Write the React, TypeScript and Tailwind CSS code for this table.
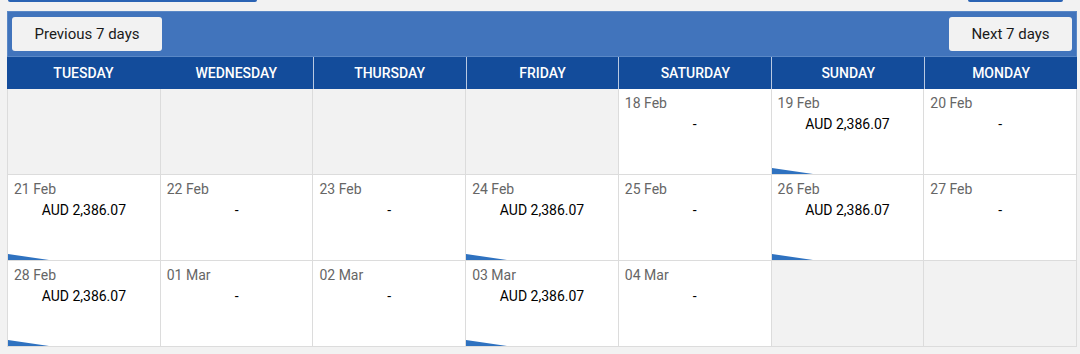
const days = ['Tuesday', 'Wednesday', 'Thursday', 'Friday', 'Saturday', 'Sunday', 'Monday']

type Cell = { date: string; price?: string } | null

const price = 'AUD 2,386.07'

const cells: Cell[] = [
  null,
  null,
  null,
  null,
  { date: '18 Feb' },
  { date: '19 Feb', price },
  { date: '20 Feb' },
  { date: '21 Feb', price },
  { date: '22 Feb' },
  { date: '23 Feb' },
  { date: '24 Feb', price },
  { date: '25 Feb' },
  { date: '26 Feb', price },
  { date: '27 Feb' },
  { date: '28 Feb', price },
  { date: '01 Mar' },
  { date: '02 Mar' },
  { date: '03 Mar', price },
  { date: '04 Mar' },
  null,
  null,
]

function Corner() {
  return (
    <svg className="absolute bottom-0 left-0" width="41" height="6" viewBox="0 0 41 6">
      <polygon points="0,0 41,6 0,6" fill="#2f72c0" />
    </svg>
  )
}

export default function App() {
  return (
    <div
      className="h-[354px] w-[1080px] overflow-hidden bg-[#f2f2f2] pl-[7px] pr-[3px]"
      style={{ fontFamily: 'Roboto, "Liberation Sans", sans-serif' }}
    >
      {/* cut-off buttons from the section above */}
      <div className="flex h-[11px] items-start justify-between">
        <div className="ml-[1px] h-[2px] w-[249px] rounded-b-[3px] bg-[#2a63b4]" />
        <div className="mr-[14px] h-[2px] w-[95px] rounded-b-[3px] bg-[#2a63b4]" />
      </div>

      {/* nav bar */}
      <div className="flex h-[46px] items-center justify-between border border-[#5a88c6] bg-[#4174bc] px-[4px]">
        <button className="h-[34px] w-[150px] rounded-[3px] bg-[#f2f2f2] text-[15px] text-[#1a1a1a]">
          Previous 7 days
        </button>
        <button className="h-[34px] w-[123px] rounded-[3px] bg-[#f2f2f2] text-[15px] text-[#1a1a1a]">
          Next 7 days
        </button>
      </div>

      {/* weekday header */}
      <div className="grid h-[32px] grid-cols-7 bg-[#134c9b]">
        {days.map((d, i) => (
          <div
            key={d}
            className={
              'flex items-center justify-center text-[14px] font-medium uppercase text-white ' +
              (i > 1 ? 'border-l border-[#b9c9e2]' : '')
            }
          >
            {d}
          </div>
        ))}
      </div>

      {/* day cells */}
      <div className="grid grid-cols-7 border-l border-[#dcdcdc]">
        {cells.map((c, i) => (
          <div
            key={i}
            className={
              'relative h-[86px] border-b border-r border-[#dcdcdc] ' +
              (c ? 'bg-white' : 'bg-[#f2f2f2]')
            }
          >
            {c && (
              <>
                <div className="pl-[6px] pt-[6px] text-[14px] leading-[16px] text-[#666666]">{c.date}</div>
                <div className="mt-[5px] text-center text-[14px] leading-[16px] text-black">
                  {c.price ?? '-'}
                </div>
                {c.price && <Corner />}
              </>
            )}
          </div>
        ))}
      </div>
    </div>
  )
}
